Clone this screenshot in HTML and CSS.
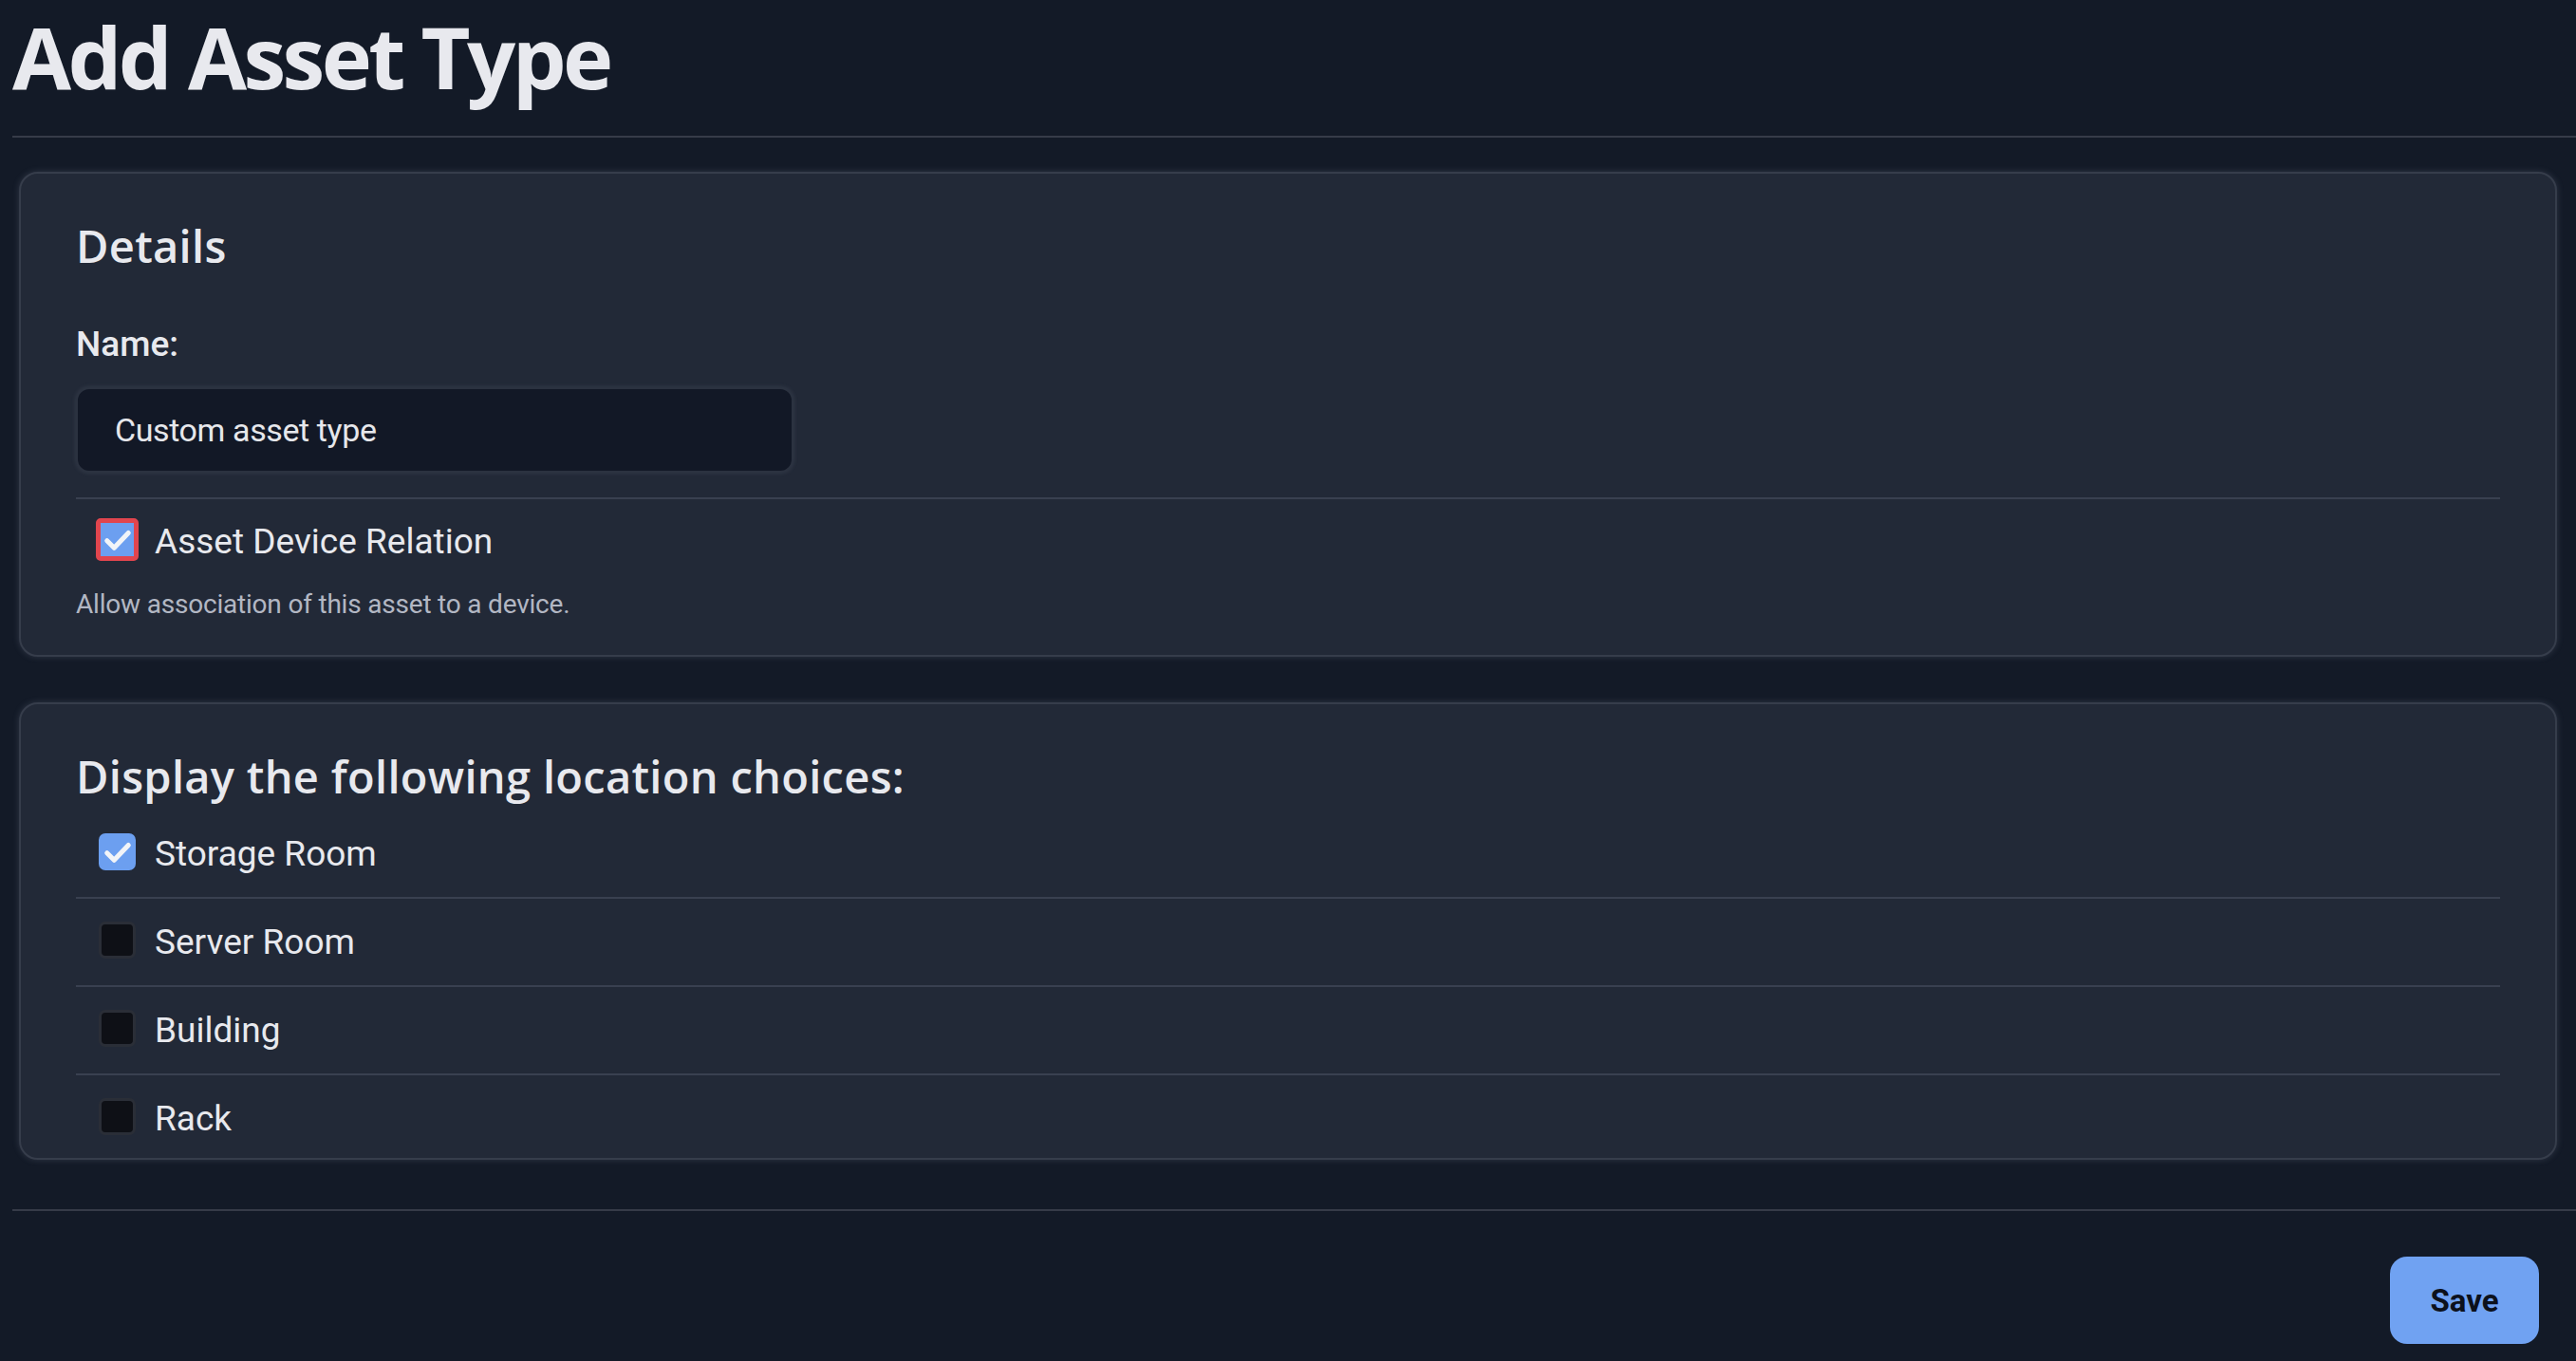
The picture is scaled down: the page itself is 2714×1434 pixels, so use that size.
FILE: index.html
```html
<!DOCTYPE html>
<html lang="en">
<head>
    <meta charset="UTF-8">
    <meta name="viewport" content="width=device-width, initial-scale=1.0">
    <title>Add Asset Type</title>
    <link rel="stylesheet" href="styles.css">
</head>
<body>
    <main class="page">
        <h1 class="page-title">Add Asset Type</h1>
        <hr class="rule">

        <form class="asset-form">
            <!-- Details -->
            <section class="card">
                <h2 class="card-title">Details</h2>
                <label class="field-label" for="assetName">Name:</label>
                <input id="assetName" class="text-input" type="text" value="Custom asset type">
                <hr class="card-rule">
                <label class="check-row">
                    <span class="box box-on box-focus">
                        <svg viewBox="0 0 24 24"><path d="M4.5 12.5l5 5L19.5 7"/></svg>
                    </span>
                    <span class="check-text">Asset Device Relation</span>
                </label>
                <p class="help">Allow association of this asset to a device.</p>
            </section>

            <!-- Locations -->
            <section class="card card-list">
                <h2 class="card-title">Display the following location choices:</h2>
                <ul class="choices">
                    <li class="choice">
                        <span class="box box-on">
                            <svg viewBox="0 0 24 24"><path d="M4.5 12.5l5 5L19.5 7"/></svg>
                        </span>
                        <span class="check-text">Storage Room</span>
                    </li>
                    <li class="choice">
                        <span class="box"></span>
                        <span class="check-text">Server Room</span>
                    </li>
                    <li class="choice">
                        <span class="box"></span>
                        <span class="check-text">Building</span>
                    </li>
                    <li class="choice">
                        <span class="box"></span>
                        <span class="check-text">Rack</span>
                    </li>
                </ul>
            </section>

            <hr class="rule rule-bottom">
            <div class="actions">
                <button type="button" class="save-btn">Save</button>
            </div>
        </form>
    </main>
</body>
</html>
```

FILE: styles.css
```css
html, body {
    background-color: #131a27;
}

body {
    margin: 0;
    font-family: Roboto, "Liberation Sans", sans-serif;
    color: #e8e9ee;
}

.page {
    padding-left: 13px;
}

.page-title {
    margin: 0;
    padding-top: 14px;
    font-family: "Open Sans", sans-serif;
    font-weight: 700;
    font-size: 90px;
    line-height: 1;
    letter-spacing: -3.6px;
    color: #e8e9ee;
}

.rule {
    height: 2px;
    margin: 39px 0 0;
    border: none;
    background-color: #363b48;
}

.card {
    margin: 36px 20px 0 7px;
    padding: 48px 58px 35px;
    background-color: #222937;
    border: 2px solid #363d4b;
    border-radius: 20px;
    box-shadow: 0 0 7px rgba(150, 160, 180, 0.22);
}

.card + .card {
    margin-top: 48px;
}

.card-list {
    padding-bottom: 0;
}

.card-title {
    margin: 0 0 53px;
    font-family: "Open Sans", sans-serif;
    font-weight: 600;
    font-size: 47px;
    line-height: 56px;
    letter-spacing: 0.3px;
}

.card-list .card-title {
    margin-bottom: 11px;
}

.field-label {
    display: block;
    font-weight: 500;
    font-size: 37px;
    line-height: 46px;
}

.text-input {
    display: block;
    box-sizing: border-box;
    width: 756px;
    height: 90px;
    margin-top: 22px;
    padding: 0 39px;
    font-family: Roboto, sans-serif;
    font-size: 34px;
    letter-spacing: -0.4px;
    color: #e6e7eb;
    background-color: #121826;
    border: 2px solid #2b3240;
    border-radius: 14px;
    box-shadow: 0 0 5px rgba(150, 160, 180, 0.18);
    outline: none;
}

.card-rule {
    height: 2px;
    margin: 26px 0 0;
    border: none;
    background-color: #394050;
}

.check-row,
.choice {
    display: flex;
    align-items: center;
    gap: 20px;
    padding-left: 24px;
}

.check-row {
    margin-top: 22px;
}

.check-text {
    font-size: 37px;
    line-height: 46px;
}

.box {
    display: flex;
    align-items: center;
    justify-content: center;
    box-sizing: border-box;
    width: 39px;
    height: 39px;
    margin-top: -5px;
    background-color: #0e1016;
    border: 3px solid #2a2e37;
    border-radius: 7px;
}

.box svg {
    width: 36px;
    height: 36px;
    fill: none;
    stroke: #f2f4f8;
    stroke-width: 3.4;
    stroke-linecap: round;
    stroke-linejoin: round;
}

.box-on {
    background-color: #6c9ff0;
    border: none;
}

.box-focus {
    border-radius: 2px;
    outline: 5px solid #e1454e;
    outline-offset: -2px;
}

.help {
    margin: 25px 0 0;
    font-size: 28px;
    line-height: 36px;
    letter-spacing: -0.2px;
    color: #b2b7c3;
}

.choices {
    margin: 0;
    padding: 0;
    list-style: none;
}

.choice {
    padding-top: 23px;
    padding-bottom: 22px;
}

.choice:first-child {
    padding-top: 20px;
}

.choice + .choice {
    border-top: 2px solid #394050;
}

.choice:last-child {
    padding-bottom: 18px;
}

.rule-bottom {
    margin-top: 52px;
}

.actions {
    display: flex;
    justify-content: flex-end;
    padding: 48px 39px 0 0;
}

.save-btn {
    width: 157px;
    height: 92px;
    font-family: Roboto, sans-serif;
    font-weight: 700;
    font-size: 33px;
    color: #0c111c;
    background-color: #70a2f2;
    border: none;
    border-radius: 18px;
    cursor: pointer;
}
```
